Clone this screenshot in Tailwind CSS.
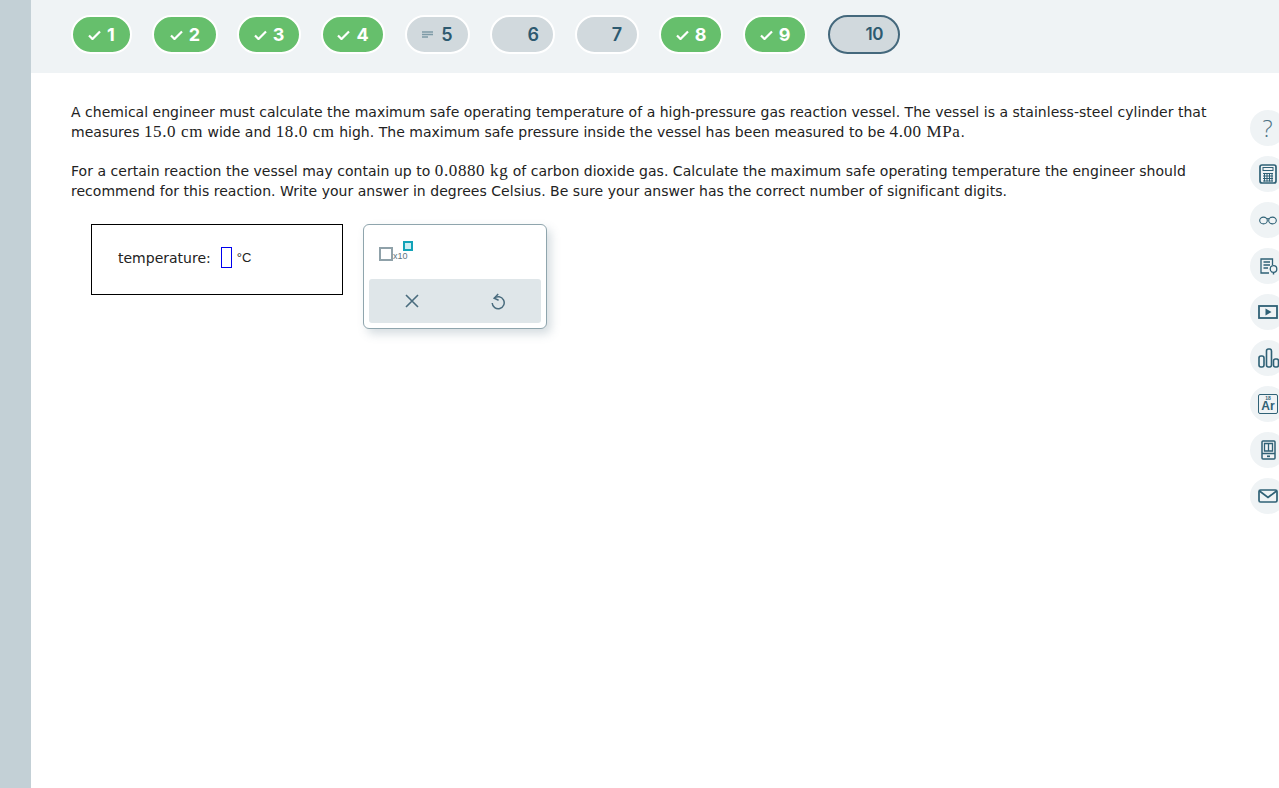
<!DOCTYPE html>
<html lang="en">
<head>
    <meta charset="UTF-8">
    <title>Question</title>
    <script src="https://cdn.jsdelivr.net/npm/@tailwindcss/browser@4"></script>
</head>
<body class="bg-white overflow-hidden">
<div class="flex h-[788px] w-[1279px] overflow-hidden">
    <!-- left strip -->
    <div class="w-[31px] shrink-0 bg-[#c3d0d6]"></div>

    <div class="flex-1 flex flex-col min-w-0">
        <!-- question pills -->
        <nav class="h-[73px] shrink-0 bg-[#eff3f5] flex items-start pt-[15px] pl-[40px] font-['Inter',sans-serif] font-bold text-[18px]">
            <div class="w-[61px] h-[39px] rounded-full bg-[#66bf6c] border-2 border-white text-white flex items-center justify-center gap-[6px]">
                <svg class="w-[13px] h-[10px]" viewBox="0 0 13 10" fill="none" stroke="white" stroke-width="2.2"><path d="M1 5.5 4.5 9 12 1.5"/></svg><span>1</span>
            </div>
            <div class="ml-[20px] w-[66px] h-[39px] rounded-full bg-[#66bf6c] border-2 border-white text-white flex items-center justify-center gap-[6px]">
                <svg class="w-[13px] h-[10px]" viewBox="0 0 13 10" fill="none" stroke="white" stroke-width="2.2"><path d="M1 5.5 4.5 9 12 1.5"/></svg><span>2</span>
            </div>
            <div class="ml-[19px] w-[64px] h-[39px] rounded-full bg-[#66bf6c] border-2 border-white text-white flex items-center justify-center gap-[6px]">
                <svg class="w-[13px] h-[10px]" viewBox="0 0 13 10" fill="none" stroke="white" stroke-width="2.2"><path d="M1 5.5 4.5 9 12 1.5"/></svg><span>3</span>
            </div>
            <div class="ml-[20px] w-[64px] h-[39px] rounded-full bg-[#66bf6c] border-2 border-white text-white flex items-center justify-center gap-[6px]">
                <svg class="w-[13px] h-[10px]" viewBox="0 0 13 10" fill="none" stroke="white" stroke-width="2.2"><path d="M1 5.5 4.5 9 12 1.5"/></svg><span>4</span>
            </div>
            <div class="ml-[20px] w-[65px] h-[39px] rounded-full bg-[#d1d9dd] border-2 border-white text-[#2d5a70] font-semibold flex items-center justify-center gap-[8px]">
                <svg class="w-[11px] h-[7px]" viewBox="0 0 11 7" fill="none" stroke="#7d9aa6" stroke-width="1.3"><path d="M0 1H11M0 3.5H11M0 6H6"/></svg><span>5</span>
            </div>
            <div class="ml-[20px] w-[65px] h-[39px] rounded-full bg-[#d1d9dd] border-2 border-white text-[#2d5a70] font-semibold flex items-center justify-end pr-[14px]">6</div>
            <div class="ml-[20px] w-[64px] h-[39px] rounded-full bg-[#d1d9dd] border-2 border-white text-[#2d5a70] font-semibold flex items-center justify-end pr-[15px]">7</div>
            <div class="ml-[20px] w-[64px] h-[39px] rounded-full bg-[#66bf6c] border-2 border-white text-white flex items-center justify-center gap-[6px]">
                <svg class="w-[13px] h-[10px]" viewBox="0 0 13 10" fill="none" stroke="white" stroke-width="2.2"><path d="M1 5.5 4.5 9 12 1.5"/></svg><span>8</span>
            </div>
            <div class="ml-[20px] w-[64px] h-[39px] rounded-full bg-[#66bf6c] border-2 border-white text-white flex items-center justify-center gap-[6px]">
                <svg class="w-[13px] h-[10px]" viewBox="0 0 13 10" fill="none" stroke="white" stroke-width="2.2"><path d="M1 5.5 4.5 9 12 1.5"/></svg><span>9</span>
            </div>
            <div class="ml-[21px] w-[72px] h-[39px] rounded-full bg-[#d1d9dd] border-2 border-[#44687c] text-[#2d5a70] font-semibold text-[17px] flex items-center justify-end pr-[15px] tracking-[-0.5px]">10</div>
        </nav>

        <div class="flex-1 flex min-h-0">
            <!-- question body -->
            <main class="w-[1219px] shrink-0 pl-[40px] pr-[40px] pt-[29px] font-['DejaVu_Sans',sans-serif] text-[14px] leading-[20px] text-[#222]">
                <p class="tracking-[0.02px]">A chemical engineer must calculate the maximum safe operating temperature of a high-pressure gas reaction vessel. The vessel is a stainless-steel cylinder that measures <span class="font-['Liberation_Serif',serif] text-[17px] tracking-[0.6px] leading-none">15.0 cm</span> wide and <span class="font-['Liberation_Serif',serif] text-[17px] tracking-[0.6px] leading-none">18.0 cm</span> high. The maximum safe pressure inside the vessel has been measured to be <span class="font-['Liberation_Serif',serif] text-[17px] tracking-[0.6px] leading-none">4.00 MPa</span>.</p>
                <p class="mt-[19px] tracking-[0.03px]">For a certain reaction the vessel may contain up to <span class="font-['Liberation_Serif',serif] text-[17px] tracking-[0.6px] leading-none">0.0880 kg</span> of carbon dioxide gas. Calculate the maximum safe operating temperature the engineer should recommend for this reaction. Write your answer in degrees Celsius. Be sure your answer has the correct number of significant digits.</p>

                <div class="flex items-start mt-[23px] ml-[20px] gap-[20px]">
                    <!-- answer box -->
                    <div class="w-[252px] h-[71px] border border-black flex items-center pl-[26px] pb-[4px] text-[#222]">
                        <span>temperature:</span>
                        <span class="ml-[10px] w-[11px] h-[21px] border border-[#0000ee]"></span>
                        <span class="ml-[5px] text-[13px] font-['Liberation_Sans',sans-serif]">°C</span>
                    </div>
                    <!-- math palette -->
                    <div class="w-[184px] h-[105px] rounded-[6px] border border-[#8fa5ad] shadow-[4px_5px_10px_rgba(90,120,135,0.25)] bg-white p-[5px] flex flex-col justify-end">
                        <div class="flex-1 relative">
                            <span class="absolute left-[10px] top-[17px] w-[14px] h-[14px] border-2 border-[#8fa1a9]"></span>
                            <span class="absolute left-[24px] top-[21px] font-['Liberation_Sans',sans-serif] text-[9px] leading-[10px] text-[#5b7482]">x10</span>
                            <span class="absolute left-[34px] top-[11px] w-[10px] h-[10px] border-2 border-[#12a3b8] bg-[#cdeef3]"></span>
                        </div>
                        <div class="h-[44px] rounded-[3px] bg-[#dfe6e9] flex items-center">
                            <div class="w-[86px] flex justify-center">
                                <svg class="w-[14px] h-[14px]" viewBox="0 0 14 14" fill="none" stroke="#4a6c7e" stroke-width="1.6"><path d="M1 1 13 13M13 1 1 13"/></svg>
                            </div>
                            <div class="w-[86px] flex justify-center">
                                <svg class="w-[14px] h-[17px]" viewBox="0 0 14 17" fill="none" stroke="#4a6c7e" stroke-width="1.5"><path d="M3.2 5.2A6 6 0 1 1 1.2 10"/><path d="M7.2 1 3.2 5.2 7.6 7.2"/></svg>
                            </div>
                        </div>
                    </div>
                </div>
            </main>

            <!-- tool rail -->
            <aside class="flex-1 overflow-hidden pt-[37px] flex flex-col gap-[10px]">
                <div class="w-9 h-9 shrink-0 rounded-full bg-[#eff3f5] flex items-center justify-center font-['Open_Sans',sans-serif] font-light text-[24px] text-[#4d7284]">
                    <span class="-ml-[1px]">?</span>
                </div>
                <div class="w-9 h-9 shrink-0 rounded-full bg-[#eff3f5] flex items-center pl-[9px]">
                    <svg class="w-[18px] h-[20px] shrink-0" viewBox="0 0 18 20" fill="none" stroke="#2f6176"><rect x="1" y="1" width="16" height="18" rx="2" stroke-width="1.7"/><rect x="4" y="3.5" width="10" height="3" stroke-width="1"/><path d="M4 9.5H14M4 12H14M4 14.5H14M4 17H14M5.5 9V17.5M8 9V17.5M10.5 9V17.5M13 9V17.5" stroke-width="1"/></svg>
                </div>
                <div class="w-9 h-9 shrink-0 rounded-full bg-[#eff3f5] flex items-center pl-[9px]">
                    <svg class="w-[18px] h-[10px] shrink-0" viewBox="0 0 18 10" fill="none" stroke="#2f6176" stroke-width="1.1"><ellipse cx="4.5" cy="5.5" rx="3.8" ry="3.4"/><ellipse cx="13.5" cy="5.5" rx="3.8" ry="3.4"/><path d="M8 4Q9 3 10 4"/></svg>
                </div>
                <div class="w-9 h-9 shrink-0 rounded-full bg-[#eff3f5] flex items-center pl-[10px]">
                    <svg class="w-[18px] h-[17px] shrink-0" viewBox="0 0 18 17" fill="none" stroke="#2f6176" stroke-width="1.3"><path d="M9 15H1V1H12.5V7"/><path d="M3.5 4H10M3.5 7H10M3.5 10H8"/><circle cx="13.5" cy="11" r="3.3"/><path d="M13.5 14.3V16.5" stroke-width="1.5"/></svg>
                </div>
                <div class="w-9 h-9 shrink-0 rounded-full bg-[#eff3f5] flex items-center pl-[8px]">
                    <svg class="w-[20px] h-[14px] shrink-0" viewBox="0 0 20 14" fill="none"><rect x="1" y="1" width="18" height="12" stroke="#2f6176" stroke-width="1.8"/><path d="M7.5 3.5V10.5L13.5 7Z" fill="#2f6176"/></svg>
                </div>
                <div class="w-9 h-9 shrink-0 rounded-full bg-[#eff3f5] flex items-center pl-[8px]">
                    <svg class="w-[21px] h-[20px] shrink-0" viewBox="0 0 21 20" fill="none" stroke="#2f6176" stroke-width="1.6"><rect x="1" y="8" width="5" height="11" rx="2"/><rect x="8.5" y="1" width="5" height="18" rx="2"/><rect x="15.5" y="11" width="5" height="8" rx="2"/></svg>
                </div>
                <div class="w-9 h-9 shrink-0 rounded-full bg-[#eff3f5] flex items-center pl-[8px]">
                    <div class="w-[20px] h-[20px] shrink-0 rounded-[2px] border-[1.5px] border-[#2f6176] flex flex-col items-center text-[#2f6176] font-['Liberation_Sans',sans-serif] font-bold">
                        <span class="text-[5px] leading-[6px]">18</span>
                        <span class="text-[12px] leading-[11px]">Ar</span>
                    </div>
                </div>
                <div class="w-9 h-9 shrink-0 rounded-full bg-[#eff3f5] flex items-center pl-[11px]">
                    <svg class="w-[15px] h-[20px] shrink-0" viewBox="0 0 15 20" fill="none" stroke="#2f6176" stroke-width="1.5"><rect x="1" y="1" width="13" height="18" rx="1"/><path d="M1 13.5H14"/><path d="M3.5 3.5H11.5V11H3.5ZM7.5 3.5V11" stroke-width="1.3"/><path d="M6 16.3H9" stroke-width="1.7"/></svg>
                </div>
                <div class="w-9 h-9 shrink-0 rounded-full bg-[#eff3f5] flex items-center pl-[8px]">
                    <svg class="w-[20px] h-[14px] shrink-0" viewBox="0 0 20 14" fill="none" stroke="#2f6176" stroke-width="1.7"><rect x="1" y="1" width="18" height="12" rx="1.5"/><path d="M1.5 2 10 8.5 18.5 2"/></svg>
                </div>
            </aside>
        </div>
    </div>
</div>
</body>
</html>
